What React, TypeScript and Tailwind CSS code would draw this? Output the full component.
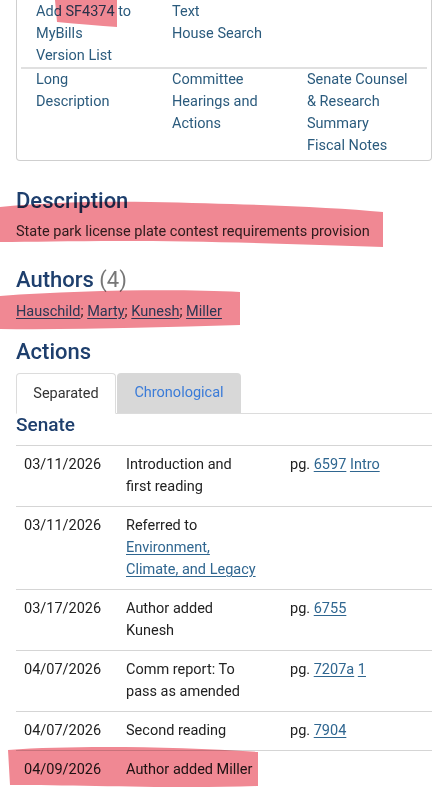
import React from 'react';

interface ActionRow {
  date: string;
  desc: React.ReactNode;
  page?: React.ReactNode;
}

const linkCls = 'text-[#2f6690] underline underline-offset-2';

function Marks() {
  // hand-drawn marker highlights laid over the page
  return (
    <svg
      className="pointer-events-none absolute left-0 top-0 mix-blend-multiply"
      width="448"
      height="795"
      viewBox="0 0 448 795"
    >
      <g fill="#f08893">
        <path d="M55,0 L117,0 L117,27 Q90,25 57,22 Z" />
        <path d="M0,207 C40,203 90,201 150,202 C250,204 330,207 383,212 L383,247 C300,244 200,241 120,241 C70,241 30,242 0,242 Z" />
        <path d="M0,296 C80,290 180,289 240,292 L240,325 C160,327 80,330 0,329 Z" />
        <path d="M8,750 C80,745 180,747 258,752 L258,786 C180,789 80,785 10,785 Z" />
      </g>
    </svg>
  );
}

function App() {
  const rows: ActionRow[] = [
    {
      date: '03/11/2026',
      desc: 'Introduction and first reading',
      page: (
        <>
          pg. <a className={linkCls}>6597</a> <a className={linkCls}>Intro</a>
        </>
      ),
    },
    {
      date: '03/11/2026',
      desc: (
        <>
          Referred to <a className={linkCls}>Environment, Climate, and Legacy</a>
        </>
      ),
    },
    {
      date: '03/17/2026',
      desc: 'Author added Kunesh',
      page: (
        <>
          pg. <a className={linkCls}>6755</a>
        </>
      ),
    },
    {
      date: '04/07/2026',
      desc: 'Comm report: To pass as amended',
      page: (
        <>
          pg. <a className={linkCls}>7207a</a> <a className={linkCls}>1</a>
        </>
      ),
    },
    {
      date: '04/07/2026',
      desc: 'Second reading',
      page: (
        <>
          pg. <a className={linkCls}>7904</a>
        </>
      ),
    },
    { date: '04/09/2026', desc: 'Author added Miller' },
  ];

  return (
    <div className="relative min-h-[795px] overflow-hidden bg-white font-['Roboto',sans-serif] text-[#222]">
      <div className="px-4">
        <div className="rounded-b border-x border-b border-[#cfcfcf] px-1 pb-[3px] pt-px text-[14.5px] leading-[22px] text-[#2b5b7d]">
          <div className="grid grid-cols-[136px_135px_1fr] pl-[15px]">
            <div className="pr-7">
              <p>Add SF4374 to MyBills</p>
              <p>Version List</p>
            </div>
            <div className="pr-7">
              <p>Text</p>
              <p>House Search</p>
            </div>
            <div />
          </div>
          <div className="grid grid-cols-[136px_135px_1fr] border-t-2 border-[#e0e0e0] pl-[15px]">
            <div className="pr-7">
              <p>Long Description</p>
            </div>
            <div className="pr-7">
              <p>Committee Hearings and Actions</p>
            </div>
            <div className="pr-[14px]">
              <p>Senate Counsel &amp; Research Summary</p>
              <p>Fiscal Notes</p>
            </div>
          </div>
        </div>

        <h2 className="mt-[27px] text-[22px] font-medium leading-[26px] text-[#1e3f6d]">Description</h2>
        <p className="mt-[7px] text-[14.5px] leading-[22px] text-[#333]">
          State park license plate contest requirements provision
        </p>

        <h2 className="mt-[24px] text-[22px] font-medium leading-[26px] text-[#1e3f6d]">
          Authors <span className="font-normal text-[#777]">(4)</span>
        </h2>
        <p className="mt-[8px] text-[14.5px] leading-[22px] text-[#333]">
          <a className={linkCls}>Hauschild</a>; <a className={linkCls}>Marty</a>;{' '}
          <a className={linkCls}>Kunesh</a>; <a className={linkCls}>Miller</a>
        </p>

        <h2 className="mt-[16px] text-[22px] font-medium leading-[26px] text-[#1e3f6d]">Actions</h2>

        <div className="mt-[8px] flex h-[41px] border-b border-[#dcdcdc] text-[14.5px]">
          <div className="-mb-px flex w-[100px] items-center justify-center rounded-t border border-[#dcdcdc] border-b-white bg-white text-[#333]">
            Separated
          </div>
          <div className="ml-[1px] flex w-[124px] items-center justify-center rounded-t bg-[#d8d8d8] text-[#3a7bd8]">
            Chronological
          </div>
        </div>

        <h3 className="text-[19px] font-medium leading-[22px] text-[#1e3f6d]">Senate</h3>

        <div className="mt-[9px] text-[14.5px] leading-[22px]">
          {rows.map((row, i) => (
            <div key={i} className="grid grid-cols-[102px_164px_1fr] border-t border-[#d5d5d5] py-2">
              <div className="px-2">{row.date}</div>
              <div className="pl-2 pr-[22px]">{row.desc}</div>
              <div className="px-2">{row.page}</div>
            </div>
          ))}
        </div>
      </div>
      <Marks />
    </div>
  );
}

export default App;
